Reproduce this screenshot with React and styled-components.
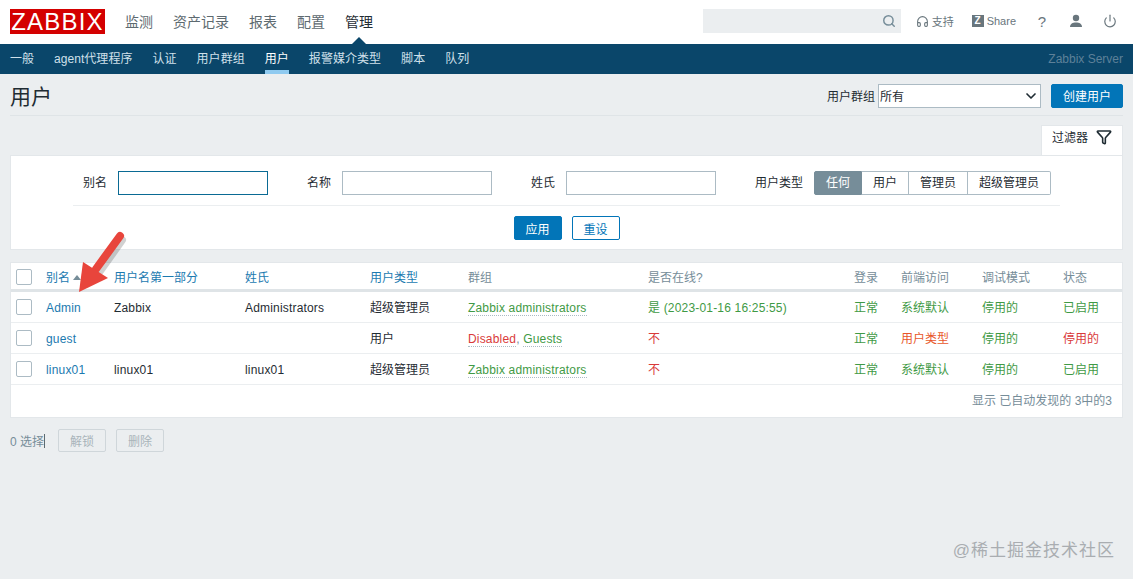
import React from "react";
import styled, { createGlobalStyle } from "styled-components";
import { Search, Headphones, Power, Filter, ChevronDown } from "lucide-react";

const FONT = `"Liberation Sans", "Noto Sans CJK SC", sans-serif`;

const GlobalStyle = createGlobalStyle`
  html, body {
    margin: 0;
    height: 100%;
    overflow: hidden;
    background: #ebeef0;
    font-family: ${FONT};
    font-size: 12px;
    color: #1f2c33;
  }
`;

const Page = styled.div`
  position: relative;
  width: 1133px;
  height: 579px;
  overflow: hidden;
`;

const TopBar = styled.header`
  height: 44px;
  background: #fff;
  display: flex;
  align-items: center;
  padding: 0 10px;
  box-sizing: border-box;
`;

const Logo = styled.div`
  width: 95px;
  height: 25px;
  margin-top: -1px;
  background: #d40000;
  color: #fff;
  font-size: 24px;
  line-height: 25px;
  letter-spacing: 1.2px;
  text-align: center;
`;

const MainNav = styled.nav`
  display: flex;
  gap: 20px;
  margin-left: 20px;
`;

const MainLink = styled.a`
  position: relative;
  font-size: 14px;
  line-height: 44px;
  color: ${(p) => (p.$active ? "#1f2c33" : "#5d6a70")};
  ${(p) =>
    p.$active &&
    `
    &::after {
      content: "";
      position: absolute;
      left: 50%;
      bottom: 0;
      margin-left: -7px;
      border-left: 7px solid transparent;
      border-right: 7px solid transparent;
      border-bottom: 7px solid #0a466a;
    }
  `}
`;

const TopRight = styled.div`
  margin: 0 -4px 2px auto;
  display: flex;
  align-items: center;
  color: #69767d;
`;

const SearchBox = styled.div`
  width: 198px;
  height: 24px;
  margin-right: 15px;
  background: #ebeef0;
  display: flex;
  align-items: center;
  justify-content: flex-end;
  padding-right: 5px;
  box-sizing: border-box;
  color: #768d99;
`;

const TopLink = styled.a`
  display: flex;
  align-items: center;
  gap: 3px;
  font-size: 11px;
  margin-right: ${(p) => p.$gap || 0}px;
  width: ${(p) => (p.$w ? `${p.$w}px` : "auto")};
  justify-content: ${(p) => (p.$w ? "center" : "flex-start")};
`;

const HelpLink = styled(TopLink)`
  font-size: 15px;
`;

const ZMark = styled.span`
  width: 12px;
  height: 12px;
  background: #69767d;
  color: #fff;
  font-size: 10px;
  font-weight: bold;
  line-height: 12px;
  text-align: center;
`;

const SubBar = styled.nav`
  height: 30px;
  background: #0a466a;
  display: flex;
  gap: 20px;
  padding: 0 10px;
  box-sizing: border-box;
`;

const SubLink = styled.a`
  line-height: 30px;
  font-size: 12px;
  letter-spacing: 0.04px;
  color: ${(p) => (p.$active ? "#fff" : "#d0e0ea")};
  box-shadow: ${(p) => (p.$active ? "inset 0 -4px 0 #8fcaf0" : "none")};
`;

const ServerName = styled.span`
  margin-left: auto;
  line-height: 30px;
  color: #5e8199;
`;

const Content = styled.main`
  padding: 0 10px;
`;

const TitleRow = styled.div`
  height: 39px;
  padding-top: 2px;
  display: flex;
  align-items: center;
  border-bottom: 1px solid #dfe4e7;
`;

const Title = styled.h1`
  margin: 0;
  padding-bottom: 2px;
  font-size: 21px;
  font-weight: normal;
  color: #1f2c33;
`;

const TitleControls = styled.div`
  margin-left: auto;
  display: flex;
  align-items: center;
`;

const SelectBox = styled.div`
  width: 163px;
  height: 24px;
  margin: 0 10px 0 3px;
  padding: 0 1px 0 1px;
  box-sizing: border-box;
  background: #fff;
  border: 1px solid #acbbc4;
  display: flex;
  align-items: center;
  justify-content: space-between;
  color: #1f2c33;
`;

const PrimaryButton = styled.button`
  width: ${(p) => p.$w}px;
  height: 24px;
  padding: 0;
  background: #0275b8;
  border: 1px solid #0275b8;
  border-radius: 2px;
  color: #fff;
  font: 12px ${FONT};
`;

const OutlineButton = styled(PrimaryButton)`
  background: #fff;
  color: #0275b8;
`;

const TabRow = styled.div`
  display: flex;
  justify-content: flex-end;
  margin-top: 9px;
`;

const FilterTab = styled.div`
  width: 82px;
  height: 30px;
  background: #fff;
  display: flex;
  align-items: center;
  justify-content: space-between;
  padding: 0 10px 8px;
  box-sizing: border-box;
  border: 1px solid #e3e7ea;
  border-bottom: 0;
`;

const FilterCard = styled.section`
  height: 95px;
  background: #fff;
  border: 1px solid #e3e7ea;
  box-sizing: border-box;
`;

const FilterFields = styled.div`
  margin: 0 62px;
  height: 50px;
  padding-bottom: 10px;
  box-sizing: border-box;
  border-bottom: 1px solid #ebeef0;
  display: flex;
  align-items: flex-end;
`;

const FieldLabel = styled.label`
  width: ${(p) => p.$w}px;
  height: 24px;
  line-height: 24px;
  text-align: right;
  padding-right: 11px;
  box-sizing: border-box;
`;

const TextInput = styled.div`
  width: 150px;
  height: 24px;
  box-sizing: border-box;
  background: #fff;
  border: 1px solid ${(p) => (p.$focus ? "#0a6a94" : "#acbbc4")};
`;

const Segments = styled.div`
  display: flex;
  height: 24px;
`;

const Segment = styled.div`
  width: ${(p) => p.$w}px;
  box-sizing: border-box;
  line-height: 22px;
  text-align: center;
  background: ${(p) => (p.$on ? "#768d99" : "#fff")};
  color: ${(p) => (p.$on ? "#fff" : "#1f2c33")};
  border: 1px solid ${(p) => (p.$on ? "#768d99" : "#acbbc4")};
  border-left-width: ${(p) => (p.$first ? 1 : 0)}px;
  border-radius: ${(p) => (p.$first ? "2px 0 0 2px" : p.$last ? "0 2px 2px 0" : "0")};
`;

const FilterActions = styled.div`
  display: flex;
  justify-content: center;
  gap: 10px;
  padding-top: 10px;
`;

const TableCard = styled.section`
  margin-top: 12px;
  background: #fff;
  border: 1px solid #e3e7ea;
  box-sizing: border-box;
`;

const Row = styled.div`
  display: grid;
  grid-template-columns: 35px 68px 131px 125px 98px 180px 206px 47px 81px 81px 1fr;
  align-items: center;
  height: ${(p) => (p.$head ? 29 : 31)}px;
  box-sizing: border-box;
  border-bottom: ${(p) => (p.$head ? "3px solid #dfe4e7" : "1px solid #ebeef0")};
`;

const Check = styled.span`
  width: 16px;
  height: 16px;
  margin-left: 5px;
  box-sizing: border-box;
  background: #fff;
  border: 1px solid #acbbc4;
  border-radius: 2px;
`;

const HeadCell = styled.span`
  padding-top: 2px;
  line-height: 26px;
  color: ${(p) => (p.$link ? "#1b7ab0" : "#768d99")};
  white-space: nowrap;
`;

const SortMark = styled.i`
  display: inline-block;
  margin-left: 3px;
  vertical-align: 2px;
  border-left: 4px solid transparent;
  border-right: 4px solid transparent;
  border-bottom: 5px solid #768d99;
`;

const Cell = styled.span`
  padding-top: 2px;
  line-height: 28px;
  color: ${(p) => p.$color || "#1f2c33"};
  letter-spacing: ${(p) => (p.$latin ? "0.18px" : "0")};
  white-space: nowrap;
`;

const GroupLink = styled.a`
  color: ${(p) => p.$color};
  border-bottom: 1px dotted #acbbc4;
`;

const TableFoot = styled.div`
  height: 32px;
  line-height: 33px;
  text-align: right;
  padding-right: 10px;
  color: #768d99;
`;

const BulkRow = styled.div`
  display: flex;
  align-items: center;
  margin-top: 11px;
  color: #768d99;
`;

const Caret = styled.span`
  width: 1px;
  height: 14px;
  margin-right: 13px;
  background: #5d6a70;
`;

const DisabledButton = styled.button`
  width: 48px;
  height: 23px;
  margin-right: 10px;
  padding: 0;
  background: #ebeef0;
  border: 1px solid #cfd6da;
  border-radius: 2px;
  color: #a9b4ba;
  font: 12px ${FONT};
`;

const ArrowOverlay = styled.svg`
  position: absolute;
  left: 70px;
  top: 222px;
  pointer-events: none;
`;

const Watermark = styled.div`
  position: absolute;
  right: 18px;
  bottom: 18px;
  font-size: 17px;
  letter-spacing: 1px;
  color: #a9adb1;
`;

const GREEN = "#3f9a45";
const RED = "#d93a3a";

const mainLinks = ["监测", "资产记录", "报表", "配置", "管理"];
const subLinks = ["一般", "agent代理程序", "认证", "用户群组", "用户", "报警媒介类型", "脚本", "队列"];

const users = [
  {
    alias: "Admin", name: "Zabbix", surname: "Administrators", type: "超级管理员",
    groups: [["Zabbix administrators", GREEN]],
    online: "是 (2023-01-16 16:25:55)", onlineColor: GREEN,
    access: "系统默认", accessColor: GREEN, status: "已启用", statusColor: GREEN,
  },
  {
    alias: "guest", name: "", surname: "", type: "用户",
    groups: [["Disabled", RED], ["Guests", GREEN]],
    online: "不", onlineColor: RED,
    access: "用户类型", accessColor: "#e8562a", status: "停用的", statusColor: RED,
  },
  {
    alias: "linux01", name: "linux01", surname: "linux01", type: "超级管理员",
    groups: [["Zabbix administrators", GREEN]],
    online: "不", onlineColor: RED,
    access: "系统默认", accessColor: GREEN, status: "已启用", statusColor: GREEN,
  },
];

const App = () => {
  return (
    <Page>
      <GlobalStyle />
      <TopBar>
        <Logo>ZABBIX</Logo>
        <MainNav>
          {mainLinks.map((l) => (
            <MainLink key={l} $active={l === "管理"}>{l}</MainLink>
          ))}
        </MainNav>
        <TopRight>
          <SearchBox><Search size={14} strokeWidth={2.5} /></SearchBox>
          <TopLink $gap={18}><Headphones size={13} />支持</TopLink>
          <TopLink $gap={9}><ZMark>Z</ZMark>Share</TopLink>
          <HelpLink $w={34}>?</HelpLink>
          <TopLink $w={34}>
            <svg width="14" height="14" viewBox="0 0 14 14" fill="currentColor">
              <circle cx="7" cy="4" r="3.2" />
              <path d="M1 13c0-3.2 2.6-4.6 6-4.6s6 1.4 6 4.6z" />
            </svg>
          </TopLink>
          <TopLink $w={34}><Power size={14} /></TopLink>
        </TopRight>
      </TopBar>
      <SubBar>
        {subLinks.map((l) => (
          <SubLink key={l} $active={l === "用户"}>{l}</SubLink>
        ))}
        <ServerName>Zabbix Server</ServerName>
      </SubBar>
      <Content>
        <TitleRow>
          <Title>用户</Title>
          <TitleControls>
            用户群组
            <SelectBox>所有<ChevronDown size={16} strokeWidth={2.5} /></SelectBox>
            <PrimaryButton $w={72}>创建用户</PrimaryButton>
          </TitleControls>
        </TitleRow>
        <TabRow>
          <FilterTab>过滤器<Filter size={16} color="#1f2c33" strokeWidth={2.4} /></FilterTab>
        </TabRow>
        <FilterCard>
          <FilterFields>
            <FieldLabel $w={45}>别名</FieldLabel>
            <TextInput $focus />
            <FieldLabel $w={74}>名称</FieldLabel>
            <TextInput />
            <FieldLabel $w={74}>姓氏</FieldLabel>
            <TextInput />
            <FieldLabel $w={98}>用户类型</FieldLabel>
            <Segments>
              <Segment $w={48} $on $first>任何</Segment>
              <Segment $w={47}>用户</Segment>
              <Segment $w={59}>管理员</Segment>
              <Segment $w={83} $last>超级管理员</Segment>
            </Segments>
          </FilterFields>
          <FilterActions>
            <PrimaryButton $w={48}>应用</PrimaryButton>
            <OutlineButton $w={48}>重设</OutlineButton>
          </FilterActions>
        </FilterCard>
        <TableCard>
          <Row $head>
            <Check />
            <HeadCell $link>别名<SortMark /></HeadCell>
            <HeadCell $link>用户名第一部分</HeadCell>
            <HeadCell $link>姓氏</HeadCell>
            <HeadCell $link>用户类型</HeadCell>
            <HeadCell>群组</HeadCell>
            <HeadCell>是否在线?</HeadCell>
            <HeadCell>登录</HeadCell>
            <HeadCell>前端访问</HeadCell>
            <HeadCell>调试模式</HeadCell>
            <HeadCell>状态</HeadCell>
          </Row>
          {users.map((u) => (
            <Row key={u.alias}>
              <Check />
              <Cell $latin $color="#1b7ab0">{u.alias}</Cell>
              <Cell $latin>{u.name}</Cell>
              <Cell $latin>{u.surname}</Cell>
              <Cell>{u.type}</Cell>
              <Cell $latin $color="#768d99">
                {u.groups.map((g, i) => (
                  <React.Fragment key={g[0]}>
                    {i > 0 && ", "}
                    <GroupLink $color={g[1]}>{g[0]}</GroupLink>
                  </React.Fragment>
                ))}
              </Cell>
              <Cell $latin $color={u.onlineColor}>{u.online}</Cell>
              <Cell $color={GREEN}>正常</Cell>
              <Cell $color={u.accessColor}>{u.access}</Cell>
              <Cell $color={GREEN}>停用的</Cell>
              <Cell $color={u.statusColor}>{u.status}</Cell>
            </Row>
          ))}
          <TableFoot>显示 已自动发现的 3中的3</TableFoot>
        </TableCard>
        <BulkRow>
          0 选择<Caret />
          <DisabledButton>解锁</DisabledButton>
          <DisabledButton>删除</DisabledButton>
        </BulkRow>
      </Content>
      <ArrowOverlay width="70" height="80" viewBox="0 0 70 80">
        <path d="M50 16 L28 47" stroke="rgba(0,0,0,0.18)" strokeWidth="8" strokeLinecap="round" transform="translate(2 2)" />
        <path d="M50 14 L26 47" stroke="#e8453c" strokeWidth="8" strokeLinecap="round" />
        <path d="M9 70 L13 40 L38 56 Z" fill="#e8453c" />
      </ArrowOverlay>
      <Watermark>@稀土掘金技术社区</Watermark>
    </Page>
  );
};

export default App;
